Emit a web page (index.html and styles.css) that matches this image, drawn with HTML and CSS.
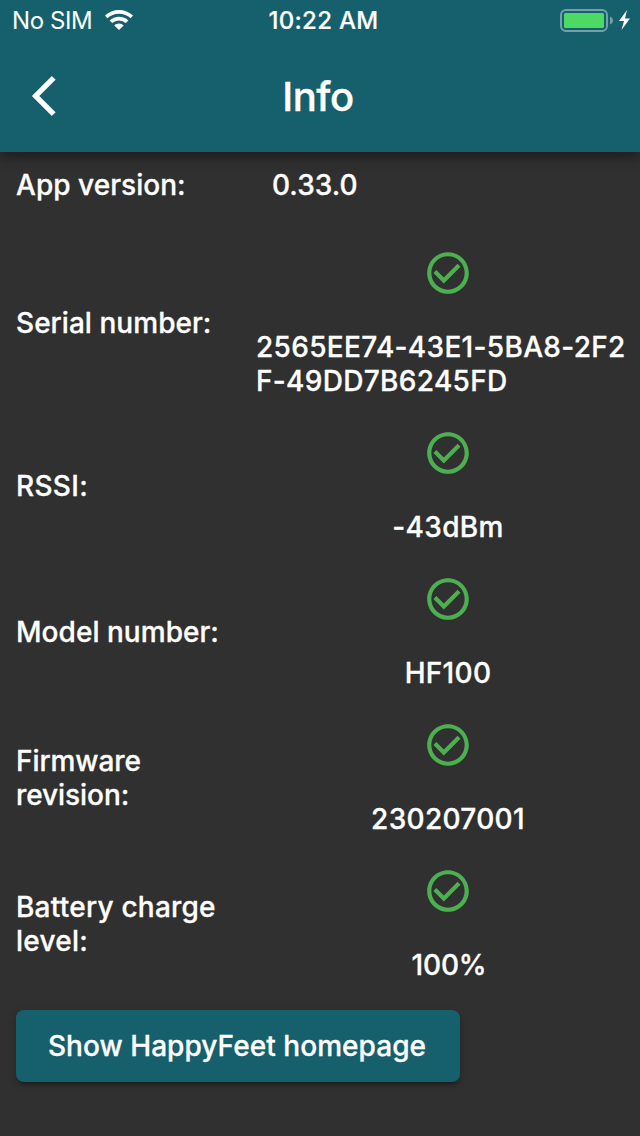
FILE: index.html
```
<!DOCTYPE html>
<html lang="en">
<head>
<meta charset="utf-8">
<title>Info</title>
<link rel="stylesheet" href="styles.css">
</head>
<body>
<svg class="defs" width="0" height="0"><symbol id="check" viewBox="0 0 24 24"><path d="M16.59 7.58 10 14.17l-3.59-3.58L5 12l5 5 8-8zM12 2C6.48 2 2 6.48 2 12s4.48 10 10 10 10-4.48 10-10S17.52 2 12 2zm0 18c-4.42 0-8-3.58-8-8s3.58-8 8-8 8 3.58 8 8-3.58 8-8 8z"/></symbol></svg>
<header class="header">
  <div class="status">
    <div class="carrier"><span class="sim">No SIM</span>
      <svg class="wifi" width="28" height="20" viewBox="0 0 28 20"><path d="M14 0C8.600 0 3.800 2 0 5.500l2.400 2.700a17 17 0 0 1 23.200 0L28 5.500C24.200 2 19.400 0 14 0zM14 6.800c-3.600 0-6.900 1.400-9.400 3.700l2.600 2.600a10 10 0 0 1 13.600 0l2.600-2.600A13.500 13.500 0 0 0 14 6.800zM14 13.600c-1.800 0-3.400.700-4.700 1.900L14 20l4.700-4.500A6.800 6.800 0 0 0 14 13.600z"/></svg>
    </div>
    <div class="time">10:22 AM</div>
    <svg class="battery" width="72" height="24" viewBox="0 0 72 24"><rect x="1" y="2" width="46" height="21" rx="5" fill="none" stroke="#74a0a7" stroke-width="2"/><rect x="4" y="5" width="40" height="15" rx="1.500" fill="#4cd964"/><path d="M50 8.500c4 1.500 4 6.500 0 8z" fill="#74a0a7"/><path d="M67 2l-8 11h5l-2.500 9L70 10.500h-5z" fill="#fff"/></svg>
  </div>
  <div class="bar"><svg class="back" width="48" height="48" viewBox="0 0 24 24"><path d="M11.670 3.870 9.900 2.100 0 12l9.900 9.900 1.770-1.770L3.540 12z"/></svg><h1 class="title">Info</h1></div>
</header>
<main class="main">
  <div class="row version"><div class="label tight">App version:</div><div class="plain">0.33.0</div></div>
  <div class="row serial"><div class="label tight">Serial number:</div><div class="value"><svg class="check"><use href="#check"/></svg><div class="text long">2565EE74-43E1-5BA8-2F2<br>F-49DD7B6245FD</div></div></div>
  <div class="row"><div class="label">RSSI:</div><div class="value"><svg class="check"><use href="#check"/></svg><div class="text">-43dBm</div></div></div>
  <div class="row"><div class="label tight">Model number:</div><div class="value"><svg class="check"><use href="#check"/></svg><div class="text">HF100</div></div></div>
  <div class="row"><div class="label firmware">Firmware<br>revision:</div><div class="value"><svg class="check"><use href="#check"/></svg><div class="text">230207001</div></div></div>
  <div class="row"><div class="label charge">Battery charge<br>level:</div><div class="value"><svg class="check"><use href="#check"/></svg><div class="text percent">100%</div></div></div>
  <button class="button">Show HappyFeet homepage</button>
</main>
</body>
</html>
```
FILE: styles.css
```
* { box-sizing: border-box; }
body { margin: 0; height: 1136px; overflow: hidden; background: #303030; color: #fff; font: 500 28px/34px Inter, "Liberation Sans", sans-serif; letter-spacing: .32px; }
.defs { display: block; height: 0; }
.header { position: relative; height: 152px; background: #16606d; box-shadow: 0 4px 8px -2px rgba(0,0,0,.2), 0 8px 10px rgba(0,0,0,.14), 0 2px 20px rgba(0,0,0,.12); }
.status { height: 40px; display: grid; grid-template-columns: 1fr auto 1fr; align-items: center; padding: 0 8px 0 12px; font-size: 24px; }
.carrier { display: flex; align-items: center; gap: 13px; font-weight: 400; letter-spacing: -.4px; }
.sim { padding-top: 2px; }
.wifi { fill: #fff; }
.time { padding: 2px 0 0 3px; letter-spacing: .3px; -webkit-text-stroke: .2px #fff; }
.battery { justify-self: end; }
.bar { height: 112px; display: grid; grid-template-columns: 100px 1fr 104px; align-items: center; }
.back { margin-left: 32px; fill: #fff; stroke: #fff; stroke-width: .2; }
.title { margin: 0; padding-top: 2px; text-align: center; font-size: 40px; line-height: 48px; font-weight: 500; letter-spacing: -.4px; -webkit-text-stroke: .4px #fff; }
.main { display: flex; flex-direction: column; -webkit-text-stroke: .3px #fff; }
.row { display: grid; grid-template-columns: 256px 384px; height: 146px; align-items: center; }
.version { height: 80px; align-items: start; padding-top: 14px; }
.serial { height: 180px; }
.label { padding: 2px 0 0 16px; letter-spacing: .3px; }
.tight { letter-spacing: .04px; }
.firmware { letter-spacing: -.07px; }
.charge { letter-spacing: .23px; }
.plain { padding: 2px 0 0 16px; letter-spacing: .05px; }
.value { display: flex; flex-direction: column; align-items: center; gap: 32px; padding-top: 1px; }
.check { width: 50px; height: 50px; fill: #4caf50; }
.long { width: 384px; white-space: nowrap; }
.percent { letter-spacing: -.2px; padding-left: 2px; }
.button { align-self: flex-start; margin: 14px 0 0 16px; padding: 0 2px 0 0; width: 444px; height: 72px; border: 0; border-radius: 8px; background: #16606d; color: #fff; font: inherit; letter-spacing: .06px; box-shadow: 0 6px 2px -4px rgba(0,0,0,.2), 0 4px 4px rgba(0,0,0,.14), 0 2px 10px rgba(0,0,0,.12); }
```
